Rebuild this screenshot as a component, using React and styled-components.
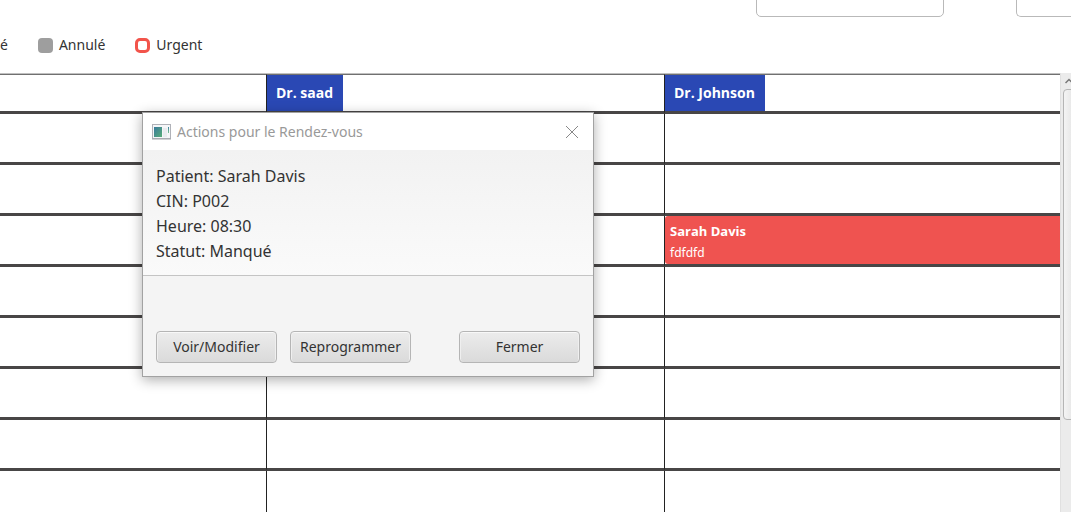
import React from "react";
import styled, { createGlobalStyle, css } from "styled-components";

const GlobalStyle = createGlobalStyle`
  * { box-sizing: border-box; }
  body {
    margin: 0;
    background: #fff;
    color: #333;
    font-family: "Noto Sans", "Open Sans", sans-serif;
    font-size: 14px;
  }
`;

const Page = styled.div`
  position: relative;
  display: flex;
  flex-direction: column;
  height: 100vh;
  overflow: hidden;
`;

const Toolbar = styled.header`
  display: flex;
  justify-content: flex-end;
  align-items: flex-end;
  gap: 72px;
  height: 17px;
  flex: none;
  overflow: hidden;
`;

const Field = styled.input`
  width: ${(p) => (p.$cut ? "55px" : "188px")};
  height: 32px;
  flex: none;
  padding: 0 8px;
  border: 1px solid #b9b9b9;
  border-radius: 5px;
  background: #fff;
  font: inherit;
  outline: none;
  ${(p) =>
    p.$cut &&
    css`
      border-right: 0;
      border-radius: 5px 0 0 5px;
    `}
`;

const Legend = styled.ul`
  display: flex;
  align-items: center;
  gap: 30px;
  height: 56px;
  flex: none;
  margin: 0;
  padding: 0;
  list-style: none;
`;

const LegendItem = styled.li`
  display: flex;
  align-items: center;
  gap: 6px;
  line-height: 20px;
`;

const Swatch = styled.span`
  width: 15px;
  height: 15px;
  border-radius: ${(p) => (p.$outline ? "5px" : "4px")};
  background: ${(p) => (p.$outline ? "#fff" : p.$color)};
  border: ${(p) => (p.$outline ? "3px" : "0")} solid ${(p) => p.$color};
`;

const Schedule = styled.main`
  display: flex;
  flex: 1;
  min-height: 0;
`;

const GridArea = styled.div`
  flex: 1;
  min-width: 0;
  overflow: hidden;
`;

const Grid = styled.table`
  width: 100%;
  table-layout: fixed;
  border-collapse: separate;
  border-spacing: 0;
  border-top: 1px solid #c0c0c0;
`;

const TimeColumn = styled.col`
  width: 266px;
`;

const DoctorColumn = styled.col`
  width: ${(p) => (p.$wide ? "398px" : "auto")};
`;

const line = css`
  padding: 0;
  border-bottom: 3px solid #484646;
  border-left: ${(p) => (p.$first ? "0" : "1px solid #222")};
  text-align: left;
  vertical-align: top;
`;

const HeadCell = styled.th`
  ${line}
  height: 40px;
  border-top: 1px solid #707070;
`;

const Cell = styled.td`
  ${line}
  height: 51px;
`;

const Doctor = styled.div`
  width: fit-content;
  padding: 0 10px 0 9px;
  background: #2a48b4;
  color: #fff;
  font-family: "Open Sans", "Noto Sans", sans-serif;
  font-weight: 700;
  line-height: 36px;
`;

const Appointment = styled.button`
  display: block;
  width: 100%;
  height: 48px;
  padding: 4px 5px;
  border: 0;
  border-radius: 3px 0 0 3px;
  background: #ef5350;
  color: #fff;
  font: inherit;
  font-size: 12px;
  line-height: 22px;
  text-align: left;
`;

const AppointmentName = styled.strong`
  display: block;
  font-family: "Open Sans", "Noto Sans", sans-serif;
  font-size: 13px;
  line-height: 22px;
`;

const ScrollBar = styled.div`
  display: flex;
  flex-direction: column;
  width: 11px;
  flex: none;
  padding-left: 2px;
  background: #ebebeb;
  border-left: 1px solid #e0e0e0;
  overflow: hidden;
`;

const ScrollUp = styled.button`
  display: block;
  width: 14px;
  height: 16px;
  flex: none;
  padding: 3px 1px;
  border: 0;
  background: transparent;
  line-height: 0;
`;

const Thumb = styled.div`
  width: 16px;
  height: 331px;
  flex: none;
  border: 1px solid #b5b5b5;
  border-radius: 4px;
  background: linear-gradient(90deg, #f4f4f4, #dedede);
`;

const Dialog = styled.section`
  position: absolute;
  left: 142px;
  top: 112px;
  width: 452px;
  border: 1px solid #a2a2a2;
  background: #f4f4f4;
  box-shadow: 0 3px 12px rgba(0, 0, 0, 0.32);
`;

const TitleBar = styled.div`
  display: flex;
  align-items: center;
  gap: 6px;
  height: 37px;
  padding: 0 14px 0 9px;
  background: #fff;
`;

const Title = styled.h1`
  flex: 1;
  margin: 0;
  color: #999;
  font-size: 14px;
  font-weight: 400;
  line-height: 20px;
`;

const CloseButton = styled.button`
  display: block;
  width: 14px;
  height: 14px;
  padding: 0;
  border: 0;
  background: transparent;
  line-height: 0;
`;

const Details = styled.div`
  padding: 14px 13px 11px;
  border-bottom: 1px solid #c4c4c4;
  background: linear-gradient(#f2f2f2, #fafafa);
  font-size: 16px;
  line-height: 25px;
`;

const Detail = styled.p`
  margin: 0;
`;

const Actions = styled.div`
  display: flex;
  gap: 13px;
  padding: 55px 13px 13px;
`;

const ActionButton = styled.button`
  width: 121px;
  height: 32px;
  padding: 0 0 2px;
  border: 1px solid #b5b5b5;
  border-radius: 4px;
  background: linear-gradient(#ececec, #dadada);
  box-shadow: inset 0 1px 0 #f8f8f8, inset 1px 0 0 #efefef, inset -1px 0 0 #efefef;
  color: #333;
  font: inherit;
  margin-left: ${(p) => (p.$end ? "auto" : "0")};
`;

const WindowIcon = () => (
  <svg width="19" height="16" viewBox="0 0 19 16" aria-hidden="true">
    <defs>
      <linearGradient id="pane" x1="0" y1="0" x2="1" y2="1">
        <stop offset="0" stopColor="#397a9c" />
        <stop offset="1" stopColor="#58ad78" />
      </linearGradient>
      <linearGradient id="strip" x1="0" y1="0" x2="0" y2="1">
        <stop offset="0" stopColor="#3f7f9f" />
        <stop offset="1" stopColor="#7cc190" />
      </linearGradient>
    </defs>
    <rect x="0.5" y="0.5" width="18" height="14" fill="#f5f6f8" stroke="#b0b2b8" />
    <path d="M0 15h19" stroke="#a3a5aa" />
    <rect x="2" y="3" width="8" height="10" fill="url(#pane)" />
    <rect x="11" y="4" width="4" height="9" fill="#e9ecef" />
    <rect x="16" y="3" width="1" height="6" fill="url(#strip)" />
  </svg>
);

const doctors = ["Dr. saad", "Dr. Johnson"];
const rows = [0, 1, 2, 3, 4, 5, 6, 7];
const appointments = { "2-1": { name: "Sarah Davis", note: "fdfdfd" } };
const details = ["Patient: Sarah Davis", "CIN: P002", "Heure: 08:30", "Statut: Manqué"];

export default function App() {
  return (
    <Page>
      <GlobalStyle />
      <Toolbar>
        <Field aria-label="Recherche" />
        <Field $cut aria-label="Date" />
      </Toolbar>
      <Legend>
        <LegendItem>é</LegendItem>
        <LegendItem>
          <Swatch $color="#9e9e9e" />
          Annulé
        </LegendItem>
        <LegendItem>
          <Swatch $color="#f2544b" $outline />
          Urgent
        </LegendItem>
      </Legend>
      <Schedule>
        <GridArea>
          <Grid>
            <colgroup>
              <TimeColumn />
              <DoctorColumn $wide />
              <DoctorColumn />
            </colgroup>
            <thead>
              <tr>
                <HeadCell $first />
                {doctors.map((name) => (
                  <HeadCell key={name} scope="col">
                    <Doctor>{name}</Doctor>
                  </HeadCell>
                ))}
              </tr>
            </thead>
            <tbody>
              {rows.map((row) => (
                <tr key={row}>
                  <Cell $first />
                  {doctors.map((name, col) => {
                    const item = appointments[`${row}-${col}`];
                    return (
                      <Cell key={name}>
                        {item && (
                          <Appointment type="button">
                            <AppointmentName>{item.name}</AppointmentName>
                            {item.note}
                          </Appointment>
                        )}
                      </Cell>
                    );
                  })}
                </tr>
              ))}
            </tbody>
          </Grid>
        </GridArea>
        <ScrollBar>
          <ScrollUp type="button" aria-label="Défiler vers le haut">
            <svg width="10" height="8" viewBox="0 0 10 8" fill="none" stroke="#777" strokeWidth="1.5">
              <path d="M0.5 6L4 2.5L7.5 6" />
            </svg>
          </ScrollUp>
          <Thumb />
        </ScrollBar>
      </Schedule>
      <Dialog role="dialog" aria-labelledby="dialog-title">
        <TitleBar>
          <WindowIcon />
          <Title id="dialog-title">Actions pour le Rendez-vous</Title>
          <CloseButton type="button" aria-label="Fermer la fenêtre">
            <svg width="14" height="14" viewBox="0 0 14 14" stroke="#888" strokeWidth="1">
              <path d="M1 1L13 13M13 1L1 13" />
            </svg>
          </CloseButton>
        </TitleBar>
        <Details>
          {details.map((text) => (
            <Detail key={text}>{text}</Detail>
          ))}
        </Details>
        <Actions>
          <ActionButton type="button">Voir/Modifier</ActionButton>
          <ActionButton type="button">Reprogrammer</ActionButton>
          <ActionButton type="button" $end>Fermer</ActionButton>
        </Actions>
      </Dialog>
    </Page>
  );
}
